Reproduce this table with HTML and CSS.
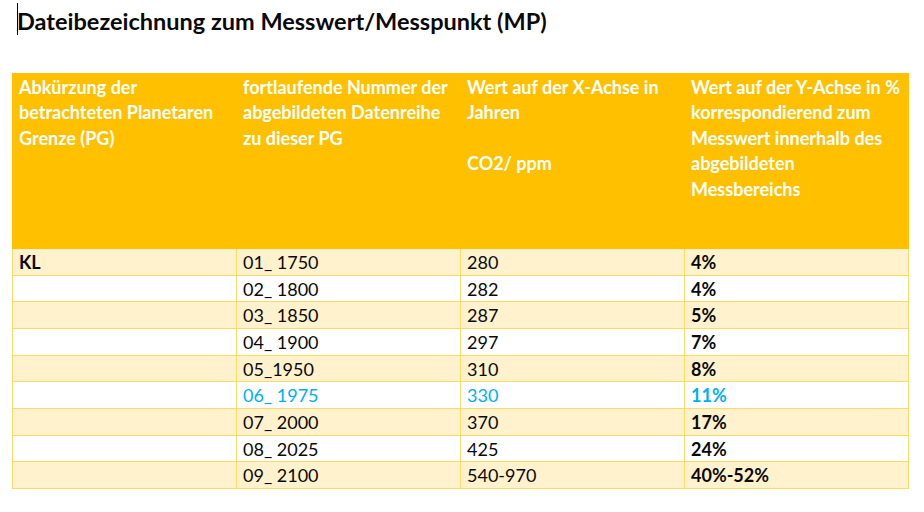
FILE: index.html
```html
<!DOCTYPE html>
<html lang="de">
<head>
<meta charset="utf-8">
<link rel="stylesheet" href="styles.css">
</head>
<body>
<div class="page">
  <h1 class="title"><span class="cursor"></span>Dateibezeichnung zum Messwert/Messpunkt (MP)</h1>
  <table class="grid">
    <thead>
      <tr class="head">
        <th>Abkürzung der betrachteten Planetaren Grenze (PG)</th>
        <th>fortlaufende Nummer der abgebildeten Datenreihe zu dieser PG</th>
        <th>Wert auf der X-Achse in Jahren<br><br>CO2/ ppm</th>
        <th>Wert auf der Y-Achse in % korrespondierend zum Messwert innerhalb des abgebildeten Messbereichs</th>
      </tr>
    </thead>
    <tbody>
      <tr class="band"><td class="b">KL</td><td>01_ 1750</td><td>280</td><td class="b">4%</td></tr>
      <tr><td></td><td>02_ 1800</td><td>282</td><td class="b">4%</td></tr>
      <tr class="band"><td></td><td>03_ 1850</td><td>287</td><td class="b">5%</td></tr>
      <tr><td></td><td>04_ 1900</td><td>297</td><td class="b">7%</td></tr>
      <tr class="band"><td></td><td>05_1950</td><td>310</td><td class="b">8%</td></tr>
      <tr class="hl"><td></td><td>06_ 1975</td><td>330</td><td class="b">11%</td></tr>
      <tr class="band"><td></td><td>07_ 2000</td><td>370</td><td class="b">17%</td></tr>
      <tr><td></td><td>08_ 2025</td><td>425</td><td class="b">24%</td></tr>
      <tr class="band"><td></td><td>09_ 2100</td><td>540-970</td><td class="b">40%-52%</td></tr>
    </tbody>
  </table>
</div>
</body>
</html>
```
FILE: styles.css
```css
html, body {
  margin: 0;
  padding: 0;
  background: #ffffff;
}
body {
  font-family: Lato, "Open Sans", sans-serif;
  color: #0a0a0a;
}
.page {
  padding: 0 15px 0 12px;
}
.title {
  margin: 0;
  height: 73px;
  box-sizing: border-box;
  padding: 7px 0 0 5px;
  font-size: 23.5px;
  line-height: 28px;
  font-weight: 700;
  color: #0a0a0a;
  position: relative;
}
.cursor {
  position: absolute;
  left: 5px;
  top: 3px;
  width: 1px;
  height: 32px;
  background: #000;
}
.grid {
  width: 897px;
  border-collapse: collapse;
  table-layout: fixed;
  font-size: 18px;
}
.grid th, .grid td {
  width: 25%;
  padding: 0 6px;
  text-align: left;
  vertical-align: top;
  border: 1px solid #ffd966;
}
.head th {
  background: #ffc000;
  border-color: #ffc000;
  color: #ffffff;
  font-size: 18px;
  font-weight: 700;
  height: 175px;
  box-sizing: border-box;
  padding-top: 1px;
  line-height: 25.4px;
}
.grid td {
  height: 26.67px;
  box-sizing: border-box;
  line-height: 24px;
  padding-top: 1px;
  font-weight: 400;
}
.grid td.b {
  font-weight: 700;
}
.band td {
  background: #fff2cc;
}
.hl td {
  color: #00b0f0;
}
```
